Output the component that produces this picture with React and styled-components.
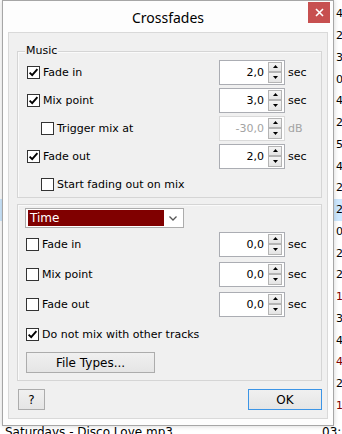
import React from "react";
import styled, { createGlobalStyle } from "styled-components";

const Global = createGlobalStyle`
  html, body { margin: 0; padding: 0; background: #ffffff; }
  body { width: 342px; height: 434px; overflow: hidden; font-family: "DejaVu Sans", sans-serif; }
`;

const Desktop = styled.div`
  position: relative;
  width: 342px;
  height: 434px;
  overflow: hidden;
  background: #ffffff;
`;

const TrackList = styled.div`
  display: flex;
  flex-direction: column;
  padding-top: 3px;
  font: 11px "DejaVu Sans", sans-serif;
`;

const TrackRow = styled.div`
  display: grid;
  grid-template-columns: 336px 1fr;
  height: 21.75px;
  align-items: center;
  white-space: nowrap;
  overflow: hidden;
  background: ${(p) => (p.$sel ? "#cde8ff" : "transparent")};
  color: ${(p) => (p.$red ? "#800000" : "#000")};
`;

const BottomRow = styled.div`
  display: grid;
  grid-template-columns: 322px 1fr;
  height: 16px;
  margin-top: 8px;
  align-items: center;
  white-space: nowrap;
  overflow: hidden;
  font: 12px "DejaVu Sans", sans-serif;
  color: #000;
`;

const BottomTitle = styled.span`
  padding-left: 5px;
`;

const Window = styled.div`
  position: absolute;
  left: 2px;
  top: 0;
  width: 332px;
  height: 426px;
  box-sizing: border-box;
  border: 1px solid #a6a6a6;
  background: #fdfdfd;
  display: flex;
  flex-direction: column;
  padding: 0 5px 6px;
  box-shadow: 0 0 5px rgba(0, 0, 0, 0.18);
`;

const TitleBar = styled.div`
  position: relative;
  height: 31px;
  flex: none;
  display: flex;
  align-items: center;
  justify-content: center;
  font: 14px "Noto Sans", sans-serif;
  color: #000;
  padding-top: 2px;
  box-sizing: border-box;
`;

const CloseButton = styled.div`
  position: absolute;
  right: -2px;
  top: 1px;
  width: 22px;
  height: 21px;
  background: #c75050;
  display: flex;
  align-items: center;
  justify-content: center;
`;

const Client = styled.div`
  flex: 1;
  display: flex;
  flex-direction: column;
  border: 1px solid #d9d9d9;
  background: #f0f0f0;
  padding: 0 5px 8px 8px;
  font: 11px "DejaVu Sans", sans-serif;
  color: #000;
`;

const GroupBox = styled.div`
  position: relative;
  box-sizing: border-box;
  height: ${(p) => p.$h}px;
  margin-top: ${(p) => p.$mt}px;
  border: 1px solid #d5d5d5;
  box-shadow: inset 1px 1px 0 #fafafa;
  display: flex;
  flex-direction: column;
  padding-top: ${(p) => p.$pt}px;
`;

const Caption = styled.span`
  position: absolute;
  top: -8px;
  left: 7px;
  padding: 0 1px;
  line-height: 14px;
  background: #f0f0f0;
`;

const Row = styled.div`
  display: flex;
  align-items: center;
  height: ${(p) => p.$h}px;
  padding-left: ${(p) => p.$indent}px;
  margin-top: ${(p) => p.$mt || 0}px;
  flex: none;
`;

const CheckLabel = styled.label`
  display: flex;
  align-items: center;
  gap: 3px;
  white-space: nowrap;
`;

const CheckBox = styled.span`
  width: 13px;
  height: 13px;
  box-sizing: border-box;
  border: 1px solid #333333;
  background: #ffffff;
  display: flex;
  align-items: center;
  justify-content: center;
  flex: none;
`;

const SpinGroup = styled.div`
  margin-left: auto;
  display: flex;
  align-items: center;
  width: 102px;
`;

const SpinBox = styled.div`
  width: 66px;
  height: 25px;
  box-sizing: border-box;
  border: 1px solid ${(p) => (p.$disabled ? "#d9d9d9" : "#abadb3")};
  background: #ffffff;
  display: flex;
  align-items: center;
  padding: 1px 2px 1px 0;
`;

const SpinValue = styled.span`
  flex: 1;
  text-align: right;
  padding-right: 4px;
  color: ${(p) => (p.$disabled ? "#a3a3a3" : "#000")};
`;

const SpinButtons = styled.div`
  width: 14px;
  height: 100%;
  display: flex;
  flex-direction: column;
`;

const SpinBtn = styled.div`
  flex: 1;
  box-sizing: border-box;
  border: 1px solid #b4b4b4;
  background: linear-gradient(#f4f4f4, #e4e4e4);
  display: flex;
  align-items: center;
  justify-content: center;
`;

const Unit = styled.span`
  padding-left: 3px;
  color: ${(p) => (p.$disabled ? "#a3a3a3" : "#000")};
`;

const Combo = styled.div`
  margin-left: 7px;
  width: 159px;
  height: 20px;
  flex: none;
  box-sizing: border-box;
  border: 1px solid #acacac;
  background: #ffffff;
  display: flex;
  align-items: center;
  padding: 1px 2px;
`;

const ComboSelected = styled.div`
  width: 136px;
  height: 16px;
  line-height: 16px;
  background: #800000;
  color: #ffffff;
  padding-left: 2px;
  box-sizing: border-box;
  font-size: 12px;
`;

const ComboArrow = styled.div`
  flex: 1;
  display: flex;
  align-items: center;
  justify-content: center;
`;

const Button = styled.button`
  width: ${(p) => p.$w}px;
  height: 21px;
  margin-left: ${(p) => p.$ml || 0}px;
  margin-top: ${(p) => p.$mt || 0}px;
  box-sizing: border-box;
  border: 1px solid ${(p) => (p.$primary ? "#3c95e6" : "#acacac")};
  background: linear-gradient(#f0f0f0, #e5e5e5);
  font: 12px "DejaVu Sans", sans-serif;
  color: #000;
  padding: 0;
  flex: none;
`;

const Footer = styled.div`
  display: flex;
  justify-content: space-between;
  align-items: center;
  margin-top: 8px;
  padding-left: 1px;
`;

const Check = () => (
  <svg width="11" height="11" viewBox="0 0 11 11">
    <path d="M1.6 5.6 L4.2 8.2 L9.4 2.2" fill="none" stroke="#000" strokeWidth="1.9" />
  </svg>
);

const Arrow = ({ down }) => (
  <svg width="5" height="3" viewBox="0 0 5 3">
    <path d={down ? "M0 0 L5 0 L2.5 3 Z" : "M0 3 L5 3 L2.5 0 Z"} fill="#000" />
  </svg>
);

const CheckItem = ({ checked, children }) => (
  <CheckLabel>
    <CheckBox>{checked && <Check />}</CheckBox>
    {children}
  </CheckLabel>
);

const Spin = ({ value, unit, disabled }) => (
  <SpinGroup>
    <SpinBox $disabled={disabled}>
      <SpinValue $disabled={disabled}>{value}</SpinValue>
      <SpinButtons>
        <SpinBtn><Arrow /></SpinBtn>
        <SpinBtn><Arrow down /></SpinBtn>
      </SpinButtons>
    </SpinBox>
    <Unit $disabled={disabled}>{unit}</Unit>
  </SpinGroup>
);

const rightCol = [
  ["4"], ["2"], ["3"], ["0"], ["4"], ["2"], ["5"], ["4"], ["2"], ["2", "sel"],
  ["0"], ["2"], ["2"], ["1", "red"], ["3"], ["4"], ["4", "red"], ["2"], ["1", "red"],
];

export default function App() {
  return (
    <Desktop>
      <Global />
      <TrackList>
        {rightCol.map(([d, kind], i) => (
          <TrackRow key={i} $sel={kind === "sel"} $red={kind === "red"}>
            <span />
            <span>{d}:0{i % 10}</span>
          </TrackRow>
        ))}
        <BottomRow>
          <BottomTitle>Saturdays - Disco Love.mp3</BottomTitle>
          <span>03:15</span>
        </BottomRow>
      </TrackList>

      <Window>
        <TitleBar>
          Crossfades
          <CloseButton>
            <svg width="9" height="9" viewBox="0 0 9 9">
              <path d="M1 1 L8 8 M8 1 L1 8" stroke="#fff" strokeWidth="1.6" />
            </svg>
          </CloseButton>
        </TitleBar>
        <Client>
          <GroupBox $h={147} $mt={18} $pt={6}>
            <Caption>Music</Caption>
            <Row $h={28} $indent={9}>
              <CheckItem checked>Fade in</CheckItem>
              <Spin value="2,0" unit="sec" />
            </Row>
            <Row $h={28} $indent={9}>
              <CheckItem checked>Mix point</CheckItem>
              <Spin value="3,0" unit="sec" />
            </Row>
            <Row $h={28} $indent={23}>
              <CheckItem>Trigger mix at</CheckItem>
              <Spin value="-30,0" unit="dB" disabled />
            </Row>
            <Row $h={28} $indent={9}>
              <CheckItem checked>Fade out</CheckItem>
              <Spin value="2,0" unit="sec" />
            </Row>
            <Row $h={28} $indent={23}>
              <CheckItem>Start fading out on mix</CheckItem>
            </Row>
          </GroupBox>

          <GroupBox $h={177} $mt={6} $pt={3}>
            <Combo>
              <ComboSelected>Time</ComboSelected>
              <ComboArrow>
                <svg width="8" height="5" viewBox="0 0 8 5">
                  <path d="M0.5 0.5 L4 4 L7.5 0.5" fill="none" stroke="#555" strokeWidth="1.3" />
                </svg>
              </ComboArrow>
            </Combo>
            <Row $h={30} $indent={8} $mt={1}>
              <CheckItem>Fade in</CheckItem>
              <Spin value="0,0" unit="sec" />
            </Row>
            <Row $h={30} $indent={8}>
              <CheckItem>Mix point</CheckItem>
              <Spin value="0,0" unit="sec" />
            </Row>
            <Row $h={30} $indent={8}>
              <CheckItem>Fade out</CheckItem>
              <Spin value="0,0" unit="sec" />
            </Row>
            <Row $h={30} $indent={8}>
              <CheckItem checked>Do not mix with other tracks</CheckItem>
            </Row>
            <Button $w={129} $ml={8} $mt={3}>File Types...</Button>
          </GroupBox>

          <Footer>
            <Button $w={27}>?</Button>
            <Button $w={74} $primary>OK</Button>
          </Footer>
        </Client>
      </Window>
    </Desktop>
  );
}
